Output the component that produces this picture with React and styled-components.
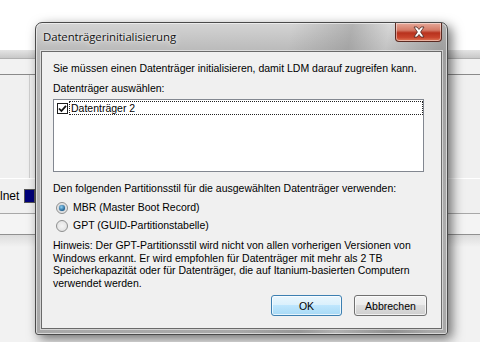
import React from "react";
import styled, { createGlobalStyle } from "styled-components";

const GlobalStyle = createGlobalStyle`
  html, body {
    margin: 0;
    padding: 0;
    width: 480px;
    height: 342px;
    overflow: hidden;
    background: #ffffff;
  }
  * {
    box-sizing: border-box;
  }
`;

const Desktop = styled.div`
  position: relative;
  width: 480px;
  height: 342px;
  overflow: hidden;
  font-family: "Liberation Sans", Arial, sans-serif;
  font-size: 10.5px;
  color: #000;
`;

/* background window behind the dialog */
const BackWindow = styled.div`
  display: flex;
  flex-direction: column;
  height: 100%;
`;

const BackTop = styled.div`
  height: 50px;
  background: #ffffff;
`;

const BackBand = styled.div`
  height: 9px;
  background: linear-gradient(#e4e4e4, #c8c8c8);
  border-bottom: 1px solid #b0b0b0;
`;

const BackHeader = styled.div`
  height: 16px;
  background: #f2f2f2;
  border-bottom: 1px solid #8a8a8a;
`;

const BackList = styled.div`
  height: 104px;
  background: #f0f0f0;
  border-bottom: 1px solid #ffffff;
  display: flex;
`;

const BackColumn = styled.div`
  width: 30px;
  border-right: 1px solid #d0d0d0;
`;

const BackRow = styled.div`
  height: 35px;
  background: #f0f0f0;
  border-bottom: 1px solid #a8a8a8;
  display: flex;
  align-items: center;
  padding-left: 0;
  gap: 5px;
  font-size: 12px;
`;

const Swatch = styled.span`
  display: inline-block;
  width: 11px;
  height: 14px;
  background: #00007a;
  border: 1px solid #555;
`;

const BackRowLow = styled.div`
  height: 21px;
  background: #f4f4f4;
  border-bottom: 1px solid #909090;
`;

const BackRest = styled.div`
  flex: 1;
  background: linear-gradient(#dcdcdc, #f2f2f2 12px, #f2f2f2);
`;

/* the dialog */
const Dialog = styled.div`
  position: absolute;
  left: 35px;
  top: 22px;
  width: 413px;
  height: 313px;
  border: 1px solid #4a4a4a;
  border-radius: 7px 7px 3px 3px;
  background:
    linear-gradient(100deg, rgba(255,255,255,0) 55%, rgba(120,120,120,0.35) 68%, rgba(255,255,255,0.1) 76%, rgba(90,90,90,0.3) 88%, rgba(255,255,255,0) 96%),
    linear-gradient(#d4d4d4, #b8b8b8 30px, #a8a8a8);
  box-shadow: 4px 4px 12px rgba(0, 0, 0, 0.55), inset 0 0 0 1px rgba(255,255,255,0.55);
  display: flex;
  flex-direction: column;
  padding: 0 5px 5px 5px;
`;

const TitleBar = styled.div`
  height: 28px;
  flex: none;
  display: flex;
  align-items: flex-start;
  justify-content: space-between;
`;

const Title = styled.span`
  font-family: "Open Sans", "Noto Sans", sans-serif;
  font-size: 11.4px;
  color: #111;
  padding: 6px 0 0 2px;
  text-shadow: 0 0 6px rgba(255,255,255,0.9), 0 0 2px rgba(255,255,255,0.9);
  letter-spacing: -0.1px;
`;

const CloseButton = styled.div`
  width: 47px;
  height: 19px;
  border: 1px solid #5a2a22;
  border-top: none;
  border-radius: 0 0 4px 4px;
  background: linear-gradient(#e6a99a, #d47a66 40%, #b8321d 55%, #c8442c 80%, #e07a58);
  box-shadow: inset 0 0 0 1px rgba(255,255,255,0.45);
  display: flex;
  align-items: center;
  justify-content: center;
`;

const Client = styled.div`
  flex: 1;
  background: #f0f0f0;
  border: 1px solid #6a6a6a;
  box-shadow: 0 0 0 1px rgba(255,255,255,0.5);
  padding: 10px 17px 0 11px;
  display: flex;
  flex-direction: column;
`;

const Label = styled.div`
  line-height: 13px;
  white-space: nowrap;
  margin-top: ${(p) => p.$mt || 0}px;
`;

const ListBox = styled.div`
  margin-top: 4px;
  height: 73px;
  background: #ffffff;
  border: 1px solid #828790;
  padding: 1px 0 1px 1px;
`;

const ListItem = styled.div`
  display: flex;
  align-items: center;
  height: 14px;
  gap: 1px;
`;

const CheckBox = styled.span`
  width: 11px;
  height: 11px;
  margin-left: 2px;
  border: 1px solid #1c1c1c;
  background: #fff;
  display: inline-flex;
  align-items: center;
  justify-content: center;
`;

const FocusText = styled.span`
  flex: 1;
  height: 14px;
  line-height: 12px;
  border: 1px dotted #222;
  padding-left: 1px;
`;

const RadioGroup = styled.div`
  margin-top: 6px;
  display: flex;
  flex-direction: column;
  gap: 5px;
  padding-left: 3px;
`;

const RadioRow = styled.label`
  display: flex;
  align-items: center;
  gap: 5px;
  height: 13px;
  line-height: 13px;
`;

const Radio = styled.span`
  width: 12px;
  height: 12px;
  border-radius: 50%;
  border: 1px solid #8e8f8f;
  background: radial-gradient(circle at 50% 50%, #f5f5f5, #dcdcdc);
  display: inline-flex;
  align-items: center;
  justify-content: center;

  &::after {
    content: "";
    display: ${(p) => (p.$checked ? "block" : "none")};
    width: 6px;
    height: 6px;
    border-radius: 50%;
    background: radial-gradient(circle at 40% 35%, #8fd1f5, #1d5e8f 70%);
    box-shadow: 0 0 1px #0a3f6b;
  }
`;

const Note = styled.p`
  margin: 7px 0 0 0;
  line-height: 12.5px;
  white-space: nowrap;
`;

const Buttons = styled.div`
  margin-top: auto;
  margin-bottom: 12px;
  display: flex;
  justify-content: flex-end;
  gap: 12px;
  margin-right: -3px;
`;

const Button = styled.button`
  width: ${(p) => (p.$default ? 71 : 73)}px;
  height: 21px;
  font-family: "Liberation Sans", Arial, sans-serif;
  font-size: 10.5px;
  color: #000;
  border-radius: 3px;
  border: 1px solid ${(p) => (p.$default ? "#3c7fb1" : "#707070")};
  background: ${(p) =>
    p.$default
      ? "linear-gradient(#eaf6fd, #d9f0fc 50%, #bee6fd 50%, #a7d9f5)"
      : "linear-gradient(#f2f2f2, #ebebeb 50%, #dddddd 50%, #cfcfcf)"};
  box-shadow: inset 0 0 0 1px rgba(255, 255, 255, 0.7);
  padding: 0;
`;

function CloseGlyph() {
  return (
    <svg width="14" height="12" viewBox="0 0 14 12">
      <path
        d="M2 1 L5 1 L7 3.5 L9 1 L12 1 L8.6 6 L12 11 L9 11 L7 8.5 L5 11 L2 11 L5.4 6 Z"
        fill="#ffffff"
        stroke="#4a2420"
        strokeWidth="0.8"
        strokeLinejoin="round"
      />
    </svg>
  );
}

function CheckGlyph() {
  return (
    <svg width="9" height="9" viewBox="0 0 9 9">
      <path d="M1 4.5 L3.4 7 L8 1.8" fill="none" stroke="#111" strokeWidth="1.8" />
    </svg>
  );
}

export default function App() {
  return (
    <Desktop>
      <GlobalStyle />
      <BackWindow>
        <BackTop />
        <BackBand />
        <BackHeader />
        <BackList>
          <BackColumn />
        </BackList>
        <BackRow>
          lnet <Swatch />
        </BackRow>
        <BackRowLow />
        <BackRest />
      </BackWindow>

      <Dialog>
        <TitleBar>
          <Title>Datenträgerinitialisierung</Title>
          <CloseButton>
            <CloseGlyph />
          </CloseButton>
        </TitleBar>
        <Client>
          <Label>Sie müssen einen Datenträger initialisieren, damit LDM darauf zugreifen kann.</Label>
          <Label $mt={7}>Datenträger auswählen:</Label>
          <ListBox>
            <ListItem>
              <CheckBox>
                <CheckGlyph />
              </CheckBox>
              <FocusText>Datenträger 2</FocusText>
            </ListItem>
          </ListBox>
          <Label $mt={10}>Den folgenden Partitionsstil für die ausgewählten Datenträger verwenden:</Label>
          <RadioGroup>
            <RadioRow>
              <Radio $checked />
              MBR (Master Boot Record)
            </RadioRow>
            <RadioRow>
              <Radio />
              GPT (GUID-Partitionstabelle)
            </RadioRow>
          </RadioGroup>
          <Note>
            Hinweis: Der GPT-Partitionsstil wird nicht von allen vorherigen Versionen von
            <br />
            Windows erkannt. Er wird empfohlen für Datenträger mit mehr als 2 TB
            <br />
            Speicherkapazität oder für Datenträger, die auf Itanium-basierten Computern
            <br />
            verwendet werden.
          </Note>
          <Buttons>
            <Button $default>OK</Button>
            <Button>Abbrechen</Button>
          </Buttons>
        </Client>
      </Dialog>
    </Desktop>
  );
}
